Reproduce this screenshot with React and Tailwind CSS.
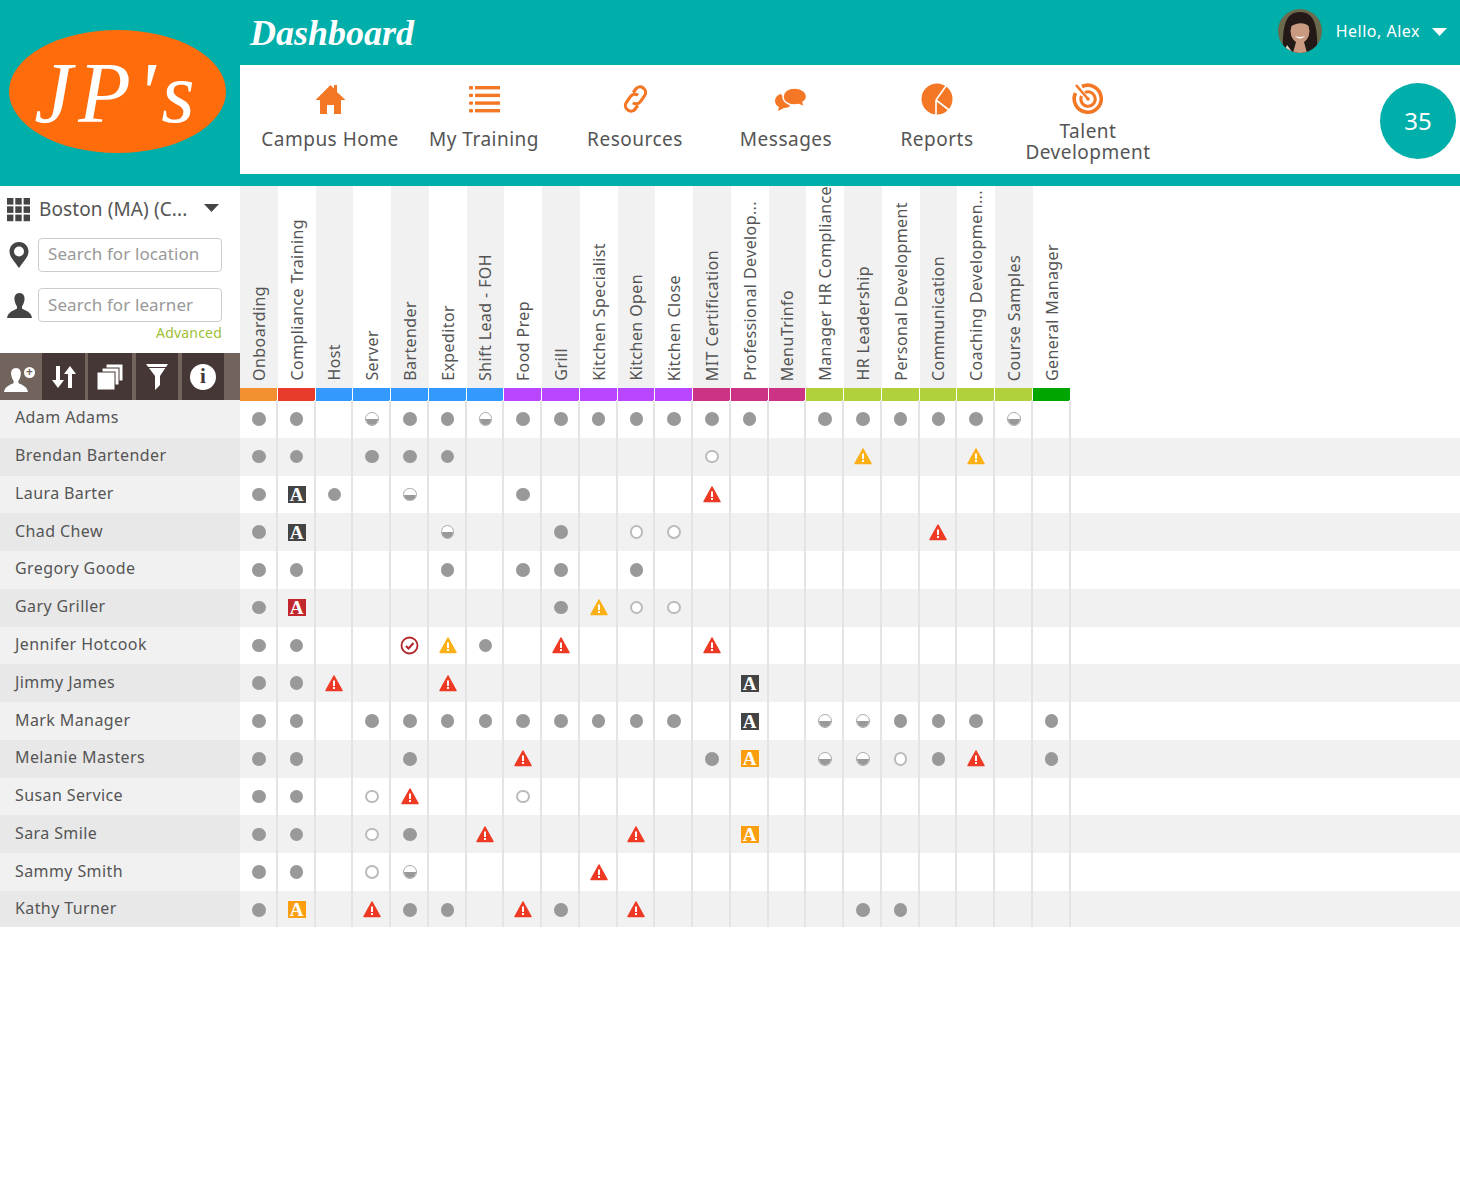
import React from 'react';

const font = { fontFamily: '"Noto Sans", sans-serif' };

const columns = [
  ['Onboarding', 'bg-[#f39130]'],
  ['Compliance Training', 'bg-[#e73b2b]'],
  ['Host', 'bg-[#3399ff]'],
  ['Server', 'bg-[#3399ff]'],
  ['Bartender', 'bg-[#3399ff]'],
  ['Expeditor', 'bg-[#3399ff]'],
  ['Shift Lead - FOH', 'bg-[#3399ff]'],
  ['Food Prep', 'bg-[#b946ff]'],
  ['Grill', 'bg-[#b946ff]'],
  ['Kitchen Specialist', 'bg-[#b946ff]'],
  ['Kitchen Open', 'bg-[#b946ff]'],
  ['Kitchen Close', 'bg-[#b946ff]'],
  ['MIT Certification', 'bg-[#cc3385]'],
  ['Professional Develop...', 'bg-[#cc3385]'],
  ['MenuTrinfo', 'bg-[#cc3385]'],
  ['Manager HR Compliance', 'bg-[#b0d13c]'],
  ['HR Leadership', 'bg-[#b0d13c]'],
  ['Personal Development', 'bg-[#b0d13c]'],
  ['Communication', 'bg-[#b0d13c]'],
  ['Coaching Developmen...', 'bg-[#b0d13c]'],
  ['Course Samples', 'bg-[#b0d13c]'],
  ['General Manager', 'bg-[#00a500]'],
];

// F full, H half, O open, R red warning, Y yellow warning, D/M/G "A" badges, C check
const learners = [
  ['Adam Adams', 'FF.HFFHFFFFFFF.FFFFFH.'],
  ['Brendan Bartender', 'FF.FFF......O...Y..Y..'],
  ['Laura Barter', 'FDF.H..F....R.........'],
  ['Chad Chew', 'FD...H..F.OO......R...'],
  ['Gregory Goode', 'FF...F.FF.F...........'],
  ['Gary Griller', 'FM......FYOO..........'],
  ['Jennifer Hotcook', 'FF..CYF.R...R.........'],
  ['Jimmy James', 'FFR..R.......D........'],
  ['Mark Manager', 'FF.FFFFFFFFF.D.HHFFF.F'],
  ['Melanie Masters', 'FF..F..R....FG.HHOFR.F'],
  ['Susan Service', 'FF.OR..O..............'],
  ['Sara Smile', 'FF.OF.R...R..G........'],
  ['Sammy Smith', 'FF.OH....R............'],
  ['Kathy Turner', 'FG.RFF.RF.R.....FF....'],
];

const Warn = ({ color }) => (
  <svg width="18" height="17" viewBox="0 0 18 17">
    <path d="M9 1 L17 15.5 H1 Z" fill={color} stroke={color} strokeWidth="1.5" strokeLinejoin="round" />
    <rect x="8" y="5.5" width="2" height="5.5" fill="#fff" />
    <rect x="8" y="12" width="2" height="2" fill="#fff" />
  </svg>
);

const Badge = ({ className }) => (
  <div
    className={`w-[18px] h-[17px] flex items-center justify-center text-white text-[19px] font-bold leading-none ${className}`}
    style={{ fontFamily: '"Liberation Serif", serif' }}
  >
    A
  </div>
);

const Mark = ({ type }) => {
  if (type === 'F') return <div className="w-[13.5px] h-[13.5px] rounded-full bg-[#999]" />;
  if (type === 'O') return <div className="w-[13.5px] h-[13.5px] rounded-full bg-white border-2 border-[#bbb]" />;
  if (type === 'H')
    return (
      <div className="w-[13.5px] h-[13.5px] rounded-full bg-white border-[1.5px] border-[#aaa] flex flex-col justify-end overflow-hidden">
        <div className="h-[5.5px] bg-[#999]" />
      </div>
    );
  if (type === 'R') return <Warn color="#ee3a24" />;
  if (type === 'Y') return <Warn color="#fbb016" />;
  if (type === 'D') return <Badge className="bg-[#444]" />;
  if (type === 'M') return <Badge className="bg-[#c1272d]" />;
  if (type === 'G') return <Badge className="bg-[#fb9f11]" />;
  if (type === 'C')
    return (
      <svg width="19" height="19" viewBox="0 0 19 19" fill="none">
        <circle cx="9.5" cy="9.5" r="8" stroke="#b3262a" strokeWidth="1.8" />
        <path d="M6 10 L8.5 12.5 L13.5 7" stroke="#b3262a" strokeWidth="2" />
      </svg>
    );
  return null;
};

const HomeIcon = () => (
  <svg width="31" height="31" viewBox="0 0 31 31" fill="#f47725">
    <path d="M15.5 1 L19 4.5 V1 H22 V8 L30.5 16 H26 V30 H19 V21 H12 V30 H5 V16 H.5 Z" />
  </svg>
);

const ListIcon = () => (
  <svg width="31" height="28" viewBox="0 0 31 28" fill="#f47725">
    {[1, 8.7, 16.4, 24].map((y) => (
      <g key={y}>
        <rect x="0" y={y} width="4" height="3.4" rx="1" />
        <rect x="6" y={y} width="25" height="3.4" />
      </g>
    ))}
  </svg>
);

const LinkIcon = () => (
  <svg width="27" height="30" viewBox="0 0 27 30" fill="none" stroke="#f47725" strokeWidth="3.2" className="overflow-visible">
    <g transform="rotate(35 13.5 15)">
      <path d="M8 11 V7 a5.5 5.5 0 0 1 11 0 V14 a5.5 5.5 0 0 1 -5.5 5.5" />
      <path d="M19 19 V23 a5.5 5.5 0 0 1 -11 0 V16 a5.5 5.5 0 0 1 5.5 -5.5" />
    </g>
  </svg>
);

const MessagesIcon = () => (
  <svg width="32" height="23" viewBox="0 0 32 23" fill="#f47725" className="ml-[10px]">
    <path d="M6 6 C2 7 0 10 0 13 C0 16 2 18 4 19 L3 23 L9 20 C12 20 14 19 15 18 Z" />
    <path d="M19.5 0 C13 0 8 3.5 8 8.5 C8 13.5 13 17 19 17 C21 17 23 17 24 16.5 L29 19 L28 14 C30 13 31.5 11 31.5 8.5 C31.5 3.5 26 0 19.5 0 Z" stroke="#fff" strokeWidth="1.4" />
  </svg>
);

const PieIcon = () => (
  <svg width="32" height="32" viewBox="0 0 32 32">
    <circle cx="16" cy="16" r="15.5" fill="#f47725" />
    <path d="M15 17 L25 3 M15 17 L28 27 M15 17 V32" stroke="#fff" strokeWidth="1.6" fill="none" />
  </svg>
);

const TargetIcon = () => (
  <svg width="32" height="32" viewBox="0 0 32 32" fill="none" stroke="#f47725">
    <path d="M10 3.5 A13.5 13.5 0 1 1 3.5 10" strokeWidth="3.6" />
    <path d="M13 9.5 A7.2 7.2 0 1 1 9.5 13" strokeWidth="3" />
    <circle cx="16" cy="16" r="1.8" fill="#f47725" stroke="none" />
    <path d="M4 2 L16 16" strokeWidth="2.6" />
  </svg>
);

const nav = [
  { label: 'Campus Home', icon: <HomeIcon />, width: 'w-[157px]' },
  { label: 'My Training', icon: <ListIcon />, width: 'w-[151px]' },
  { label: 'Resources', icon: <LinkIcon />, width: 'w-[151px]' },
  { label: 'Messages', icon: <MessagesIcon />, width: 'w-[151px]' },
  { label: 'Reports', icon: <PieIcon />, width: 'w-[151px]' },
  { label: 'Talent Development', icon: <TargetIcon />, width: 'w-[151px]', tight: true },
];

const Avatar = () => (
  <svg width="44" height="44" viewBox="0 0 44 44" className="rounded-full">
    <rect width="44" height="44" fill="#6b6a4c" />
    <path d="M5 44 C4 18 7 3 22 3 C37 3 40 18 39 44 Z" fill="#231a18" />
    <ellipse cx="22" cy="22" rx="9.5" ry="12" fill="#c99a80" />
    <path d="M12 18 C14 10 20 8 26 9 C30 10 32 14 32 18 C28 14 20 12 12 18 Z" fill="#231a18" />
    <path d="M17 27 Q22 32 27 27 Q22 29 17 27 Z" fill="#fff" />
    <path d="M15 44 L18 33 H26 L29 44 Z" fill="#c99a80" />
    <path d="M6 44 L9 36 L15 44 Z" fill="#e6dccb" />
  </svg>
);

const GridIcon = () => (
  <svg width="23" height="24" viewBox="0 0 23 24" fill="#444">
    {[0, 8.3, 16.6].map((y) =>
      [0, 8.3, 16.6].map((x) => <rect key={`${x}-${y}`} x={x} y={y} width="6.4" height="6.6" />)
    )}
  </svg>
);

const PinIcon = () => (
  <svg width="20" height="26" viewBox="0 0 20 26">
    <path d="M10 0 C4 0 .5 4.5 .5 9.5 C.5 15 6 20 10 26 C14 20 19.5 15 19.5 9.5 C19.5 4.5 16 0 10 0 Z" fill="#444" />
    <circle cx="10" cy="9.5" r="5" fill="#fff" />
  </svg>
);

const PersonIcon = ({ color = '#444', size = 25 }) => (
  <svg width={size} height={size} viewBox="0 0 25 25" fill={color}>
    <path d="M12.5 0 C8.5 0 7 3.5 7.5 7 C8 10 9 12 10 13.5 V15.5 C7 17.5 1 18.5 0 25 H25 C24 18.5 18 17.5 15 15.5 V13.5 C16 12 17 10 17.5 7 C18 3.5 16.5 0 12.5 0 Z" />
  </svg>
);

const ToolButton = ({ children, className = '' }) => (
  <div className={`flex items-center justify-center bg-[#443735] ${className}`}>{children}</div>
);

const Caret = ({ color, className = '' }) => (
  <svg width="15" height="8" viewBox="0 0 15 8" className={className}>
    <path d="M0 0 H15 L7.5 8 Z" fill={color} />
  </svg>
);

const Toolbar = () => (
  <div className="h-[48px] flex bg-[#72645d]">
    <div className="w-[42px] flex items-end pl-[4px] pb-[9px] relative">
      <PersonIcon color="#fff" size={24} />
      <div className="absolute top-[14px] left-[24px] w-[11px] h-[11px] rounded-full bg-white flex items-center justify-center text-[#72645d] text-[12px] leading-none font-bold">
        +
      </div>
    </div>
    <ToolButton className="w-[43px]">
      <svg width="24" height="24" viewBox="0 0 24 24" fill="#fff">
        <path d="M4 1 H8 V15 H12 L6 23 L0 15 H4 Z" />
        <path d="M16 23 V9 H12 L18 1 L24 9 H20 V23 Z" />
      </svg>
    </ToolButton>
    <ToolButton className="w-[44px] ml-[3px]">
      <svg width="28" height="28" viewBox="0 0 28 28">
        <rect x="10" y="1" width="17" height="17" fill="#fff" stroke="#443735" />
        <rect x="6" y="5" width="17" height="17" fill="#fff" stroke="#443735" />
        <rect x="1" y="9" width="18" height="18" fill="#fff" stroke="#443735" />
      </svg>
    </ToolButton>
    <ToolButton className="w-[42px] ml-[4px]">
      <svg width="24" height="27" viewBox="0 0 24 27" fill="#fff">
        <path d="M1 1 H23 L15 13 V22 L10 27 V13 Z" />
        <rect x="1" y="4" width="22" height="1" fill="#443735" />
      </svg>
    </ToolButton>
    <ToolButton className="w-[42px] ml-[4px]">
      <div
        className="w-[26px] h-[26px] rounded-full bg-white flex items-center justify-center text-[#443735] text-[21px] font-bold leading-none"
        style={{ fontFamily: '"Liberation Serif", serif' }}
      >
        i
      </div>
    </ToolButton>
  </div>
);

const Filters = () => (
  <div className="flex-1 flex flex-col text-[#555]">
    <div className="flex items-center h-[46px] pl-[7px] pt-[1px]">
      <GridIcon />
      <div className="ml-[9px] text-[19px] leading-none text-[#555] tracking-[0.1px]">Boston (MA) (C...</div>
      <Caret color="#444" className="ml-[17px] mb-[3px]" />
    </div>
    <div className="flex items-center pl-[9px] mt-[6px]">
      <PinIcon />
      <input
        placeholder="Search for location"
        className="ml-[9px] w-[184px] h-[34px] border border-[#ccc] rounded-[4px] px-[9px] pb-[3px] text-[17px] tracking-[0.1px] placeholder:text-[#999] outline-none"
      />
    </div>
    <div className="flex items-center pl-[7px] mt-[16px]">
      <PersonIcon />
      <input
        placeholder="Search for learner"
        className="ml-[6px] w-[184px] h-[34px] border border-[#ccc] rounded-[4px] px-[9px] pb-[2px] text-[17px] tracking-[0.1px] placeholder:text-[#999] outline-none"
      />
    </div>
    <div className="pr-[18px] text-right text-[14px] leading-[20px] text-[#9dc034] mt-[1px] tracking-[0.2px]">Advanced</div>
  </div>
);

const gridCols = 'grid grid-cols-[240px_repeat(22,37.76px)_1fr]';

export default function App() {
  return (
    <div className="min-h-[1180px] bg-white" style={font}>
      <header className="flex h-[186px] bg-[#00aeaa]">
        <div className="w-[240px] pl-[9px] pt-[30px]">
          <div
            className="w-[217px] h-[123px] pt-[3px] rounded-[50%] bg-[#ff6c0c] flex items-center justify-center text-white text-[86px] leading-none italic tracking-[6px]"
            style={{ fontFamily: '"Liberation Serif", serif' }}
          >
            JP's
          </div>
        </div>
        <div className="flex-1 flex flex-col">
          <div className="h-[65px] flex items-center pl-[10px] pr-[13px]">
            <h1
              className="text-[36px] font-bold italic leading-none text-white"
              style={{ fontFamily: '"Liberation Serif", serif' }}
            >
              Dashboard
            </h1>
            <div className="ml-auto mb-[4px] flex items-center text-white">
              <Avatar />
              <span className="ml-[14px] text-[16px] tracking-[0.5px]">Hello, Alex</span>
              <Caret color="#fff" className="ml-[12px] mt-[2px]" />
            </div>
          </div>
          <div className="h-[109px] bg-white flex items-center pl-[11.5px] pr-[4px]">
            {nav.map((item) => (
              <div key={item.label} className={`${item.width} h-full flex flex-col items-center text-[#555]`}>
                <div className="h-[34px] mt-[17px] flex items-center justify-center">{item.icon}</div>
                <div
                  className={
                    item.tight
                      ? 'mt-[5px] w-[140px] text-center text-[19px] leading-[21px] tracking-[0.5px]'
                      : 'mt-[13px] text-center text-[19px] leading-[21px] tracking-[0.5px]'
                  }
                >
                  {item.label}
                </div>
              </div>
            ))}
            <div className="ml-auto mt-[3px] w-[76px] h-[76px] rounded-full bg-[#00aeaa] text-white text-[24px] flex items-center justify-center">
              35
            </div>
          </div>
        </div>
      </header>

      <div className={`${gridCols} h-[214px]`}>
        <div className="flex flex-col">
          <Filters />
          <Toolbar />
        </div>
        {columns.map(([label, color], i) => (
          <div key={label} className="flex flex-col">
            <div className={`flex-1 min-h-0 flex justify-center items-end pb-[7px] ${i % 2 === 0 ? 'bg-[#f1f1f1]' : 'bg-white'}`}>
              <span className="[writing-mode:vertical-rl] rotate-180 whitespace-nowrap text-[16px] leading-none text-[#555] tracking-[0.4px]">
                {label}
              </span>
            </div>
            <div className={`h-[13px] mr-[1px] ${color}`} />
          </div>
        ))}
      </div>

      <div className="h-[527px] overflow-hidden">
        {learners.map(([name, marks], r) => (
          <div key={name} className={`${gridCols} h-[37.77px] ${r % 2 === 1 ? 'bg-[#f1f1f1]' : 'bg-white'}`}>
            <div className={`flex items-center pl-[15px] pb-[3px] text-[16px] tracking-[0.4px] text-[#555] ${r % 2 === 1 ? 'bg-[#e8e8e8]' : 'bg-[#f1f1f1]'}`}>
              {name}
            </div>
            {marks.split('').map((m, c) => (
              <div key={c} className="flex items-center justify-center pl-[2px] border-r-2 border-[#e4e4e4]">
                <Mark type={m} />
              </div>
            ))}
          </div>
        ))}
      </div>
    </div>
  );
}
